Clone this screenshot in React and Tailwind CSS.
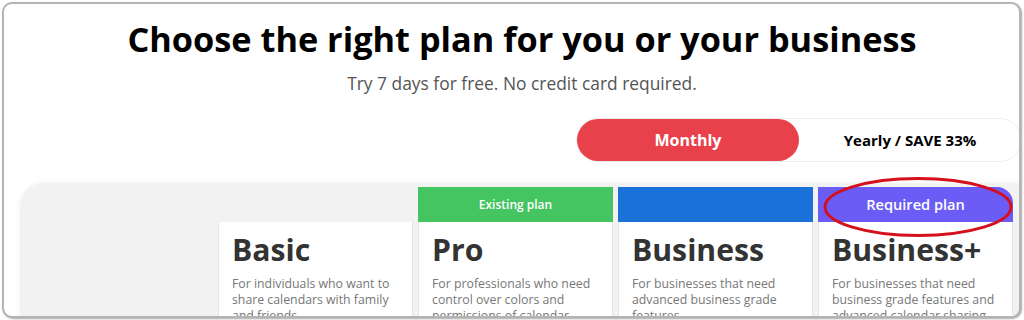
import React from "react";

const plans = [
  {
    name: "Basic",
    desc: "For individuals who want to share calendars with family and friends",
    badge: null,
  },
  {
    name: "Pro",
    desc: "For professionals who need control over colors and permissions of calendar sharing",
    badge: { label: "Existing plan", className: "bg-[#45c462] text-[12px]" },
  },
  {
    name: "Business",
    desc: "For businesses that need advanced business grade features",
    badge: { label: "", className: "bg-[#1a72d8]" },
  },
  {
    name: "Business+",
    desc: "For businesses that need business grade features and advanced calendar sharing",
    badge: { label: "Required plan", className: "bg-[#6b5cf6] text-[14.6px] rounded-tr-[16px]" },
  },
];

const App = () => {
  return (
    <div
      className="w-[1024px] h-[320px] bg-white overflow-hidden pt-[2px] pl-[2px]"
      style={{ fontFamily: '"Open Sans", "Noto Sans", sans-serif' }}
    >
      <div className="relative w-[1019px] h-[316px] overflow-hidden rounded-[10px] border-2 border-[#b4b4b4] bg-white shadow-[1px_1px_2px_rgba(0,0,0,0.35)]">
        <div className="w-[1036px] flex flex-col">
          <div className="pt-[15px] flex flex-col items-center">
            <h1 className="text-[34.3px] leading-[40px] font-bold text-black">
              Choose the right plan for you or your business
            </h1>
            <p className="mt-[12px] text-[17.4px] leading-[24px] text-[#555]">
              Try 7 days for free. No credit card required.
            </p>
          </div>

          <div className="mt-[23px] ml-[572px] flex w-[446px] h-[44px] rounded-full border border-[#ececec] bg-white">
            <button className="w-[222px] h-[42px] rounded-full bg-[#e8414b] text-white text-[16px] font-bold">
              Monthly
            </button>
            <button className="flex-1 text-[15px] font-bold text-black">
              Yearly / SAVE 33%
            </button>
          </div>

          <div className="mt-[21px] ml-[16px] flex gap-[5px] pt-[4px] h-[140px] rounded-tl-[24px] bg-[#f2f2f2] shadow-[0_0_6px_rgba(0,0,0,0.06)]">
            <div className="w-[193px] shrink-0" />
            {plans.map((plan) => (
              <div key={plan.name} className="w-[195px] shrink-0 flex flex-col">
                {plan.badge ? (
                  <div
                    className={`h-[35px] shrink-0 flex items-center justify-center text-white font-semibold ${plan.badge.className}`}
                  >
                    {plan.badge.label}
                  </div>
                ) : (
                  <div className="h-[35px] shrink-0" />
                )}
                <div className="flex-1 bg-white border-x border-[#e6e6e6] px-[13px] pt-[9px]">
                  <h2 className="text-[30.2px] leading-[38px] font-bold text-[#333]">
                    {plan.name}
                  </h2>
                  <p className="mt-[7px] text-[12.3px] leading-[16px] text-[#777]">
                    {plan.desc}
                  </p>
                </div>
              </div>
            ))}
          </div>
        </div>

        <svg
          className="absolute left-[816px] top-[171px]"
          width="196"
          height="64"
          viewBox="0 0 196 64"
        >
          <ellipse
            cx="98"
            cy="32"
            rx="93"
            ry="28.5"
            fill="none"
            stroke="#d60f1c"
            strokeWidth="3"
          />
        </svg>
      </div>
    </div>
  );
};

export default App;
